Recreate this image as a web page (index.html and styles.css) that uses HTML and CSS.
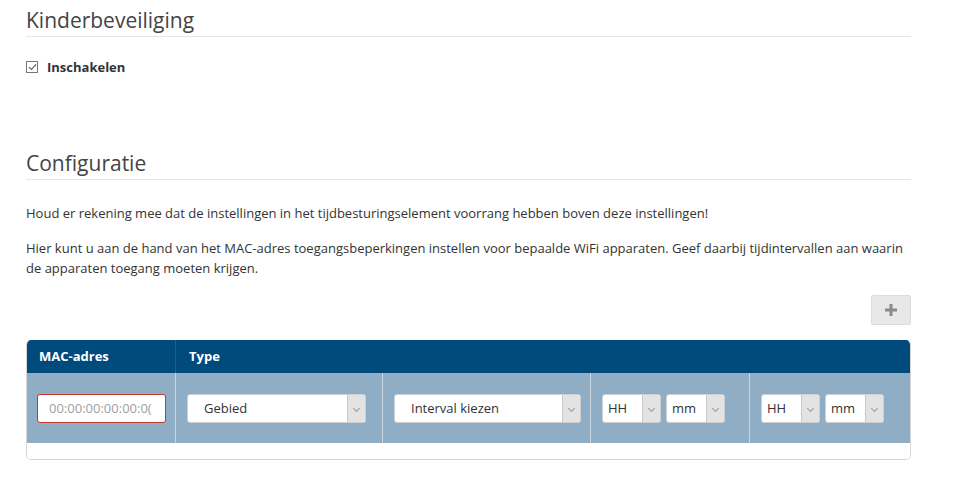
FILE: index.html
```html
<!DOCTYPE html>
<html>
<head>
<meta charset="utf-8">
<link rel="stylesheet" href="styles.css">
</head>
<body>
<div class="page">
  <section class="section">
    <h2 class="section-title">Kinderbeveiliging</h2>
    <label class="check">
      <span class="check-box"><svg width="9" height="8" viewBox="0 0 9 8"><path d="M1 4.2 L3.4 6.5 L8 1.3" fill="none" stroke="#555" stroke-width="1.1"/></svg></span>
      <span class="check-label">Inschakelen</span>
    </label>
  </section>

  <section class="section config">
    <h2 class="section-title">Configuratie</h2>
    <p class="para first">Houd er rekening mee dat de instellingen in het tijdbesturingselement voorrang hebben boven deze instellingen!</p>
    <p class="para">Hier kunt u aan de hand van het MAC-adres toegangsbeperkingen instellen voor bepaalde WiFi apparaten. Geef daarbij tijdintervallen aan waarin de apparaten toegang moeten krijgen.</p>
    <div class="toolbar">
      <button class="add-btn"><svg width="14" height="14" viewBox="0 0 14 14"><path d="M7 1 V13 M1 7 H13" stroke="#8a8a8a" stroke-width="3"/></svg></button>
    </div>
    <div class="table">
      <div class="thead">
        <div class="th c1">MAC-adres</div>
        <div class="th c-rest">Type</div>
      </div>
      <div class="trow">
        <div class="td c1"><div class="mac-input">00:00:00:00:00:0(</div></div>
        <div class="td c2"><div class="select sel-type"><span>Gebied</span><i class="arrow"></i></div></div>
        <div class="td c3"><div class="select sel-int"><span>Interval kiezen</span><i class="arrow"></i></div></div>
        <div class="td c4"><div class="select sel-small"><span>HH</span><i class="arrow"></i></div><div class="select sel-small"><span>mm</span><i class="arrow"></i></div></div>
        <div class="td c5"><div class="select sel-small"><span>HH</span><i class="arrow"></i></div><div class="select sel-small"><span>mm</span><i class="arrow"></i></div></div>
      </div>
      <div class="tfoot"></div>
    </div>
  </section>
</div>
</body>
</html>
```

FILE: styles.css
```css
* { box-sizing: border-box; }
html, body { margin: 0; padding: 0; background: #fff; }
body {
  font-family: "Open Sans", "Liberation Sans", sans-serif;
  font-size: 13px;
  color: #333;
}
.page {
  width: 885px;
  margin-left: 26px;
}
.section-title {
  margin: 0;
  font-weight: 400;
  font-size: 21px;
  line-height: 30px;
  color: #444;
  padding-top: 5px;
  padding-bottom: 1px;
  border-bottom: 1px solid #e6e6e6;
}
.check {
  display: flex;
  align-items: center;
  margin-top: 23px;
  height: 13px;
}
.check-box {
  width: 12px;
  height: 12px;
  border: 1px solid #777;
  display: flex;
  align-items: center;
  justify-content: center;
  margin-right: 9px;
}
.check-label {
  font-weight: 700;
  color: #333;
}
.config { margin-top: 70px; }
.para {
  margin: 0;
  line-height: 20px;
}
.para.first { margin-top: 23px; margin-bottom: 15px; }
.toolbar {
  display: flex;
  justify-content: flex-end;
  margin-top: 17px;
}
.add-btn {
  width: 40px;
  height: 30px;
  background: #e8e8e8;
  border: 1px solid #dcdcdc;
  border-radius: 2px;
  padding: 0;
  display: flex;
  align-items: center;
  justify-content: center;
}
.table {
  margin-top: 15px;
  border-radius: 5px;
  border: 1px solid #d6d6d6;
  border-top: none;
  overflow: hidden;
}
.thead {
  display: flex;
  background: #004a7c;
  height: 33px;
  margin: 0 -1px;
}
.th {
  color: #fff;
  font-weight: 700;
  line-height: 33px;
  padding-left: 13px;
}
.th.c1 { width: 150px; border-right: 1px solid #1a5f8f; }
.th.c-rest { flex: 1; }
.trow {
  display: flex;
  background: #8fadc4;
  height: 70px;
  margin: 0 -1px;
}
.td {
  display: flex;
  align-items: center;
  padding-left: 11px;
  gap: 5px;
  border-right: 1px solid #c8d5df;
}
.td:last-child { border-right: none; }
.c1 { width: 150px; }
.c2 { width: 207px; }
.c3 { width: 208px; }
.c4 { width: 159px; }
.c5 { flex: 1; }
.mac-input {
  width: 129px;
  height: 29px;
  background: #fff;
  border: 1px solid #c0392b;
  border-radius: 3px;
  color: #a0a0a0;
  line-height: 27px;
  padding-left: 11px;
  overflow: hidden;
  white-space: nowrap;
}
.select {
  display: flex;
  height: 29px;
  background: #fff;
  border: 1px solid #d0d0d0;
  border-radius: 3px;
  overflow: hidden;
}
.select span {
  flex: 1;
  line-height: 27px;
  color: #333;
  padding-left: 16px;
}
.sel-type { width: 179px; }
.sel-int { width: 187px; }
.sel-small { width: 59px; }
.sel-small span { padding-left: 5px; }
.arrow {
  width: 18px;
  background: #e3e3e3;
  border-left: 1px solid #c8c8c8;
  position: relative;
}
.arrow::after {
  content: "";
  position: absolute;
  left: 6px;
  top: 11px;
  width: 4px;
  height: 4px;
  border-right: 1px solid #999;
  border-bottom: 1px solid #999;
  transform: rotate(45deg);
}
.tfoot {
  height: 16px;
  background: #fff;
}
```
